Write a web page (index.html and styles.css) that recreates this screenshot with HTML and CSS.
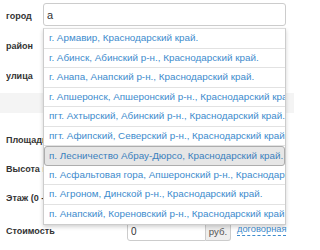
FILE: index.html
```html
<!DOCTYPE html>
<html lang="ru">
<head>
<meta charset="utf-8">
<link rel="stylesheet" href="styles.css">
</head>
<body>
<form class="form">
  <div class="row top">
    <label class="lbl">город</label>
    <div class="field">
      <input class="inp" type="text" value="а">
      <ul class="suggest">
        <li class="item">г. Армавир, Краснодарский край.</li>
        <li class="item">г. Абинск, Абинский р-н., Краснодарский край.</li>
        <li class="item">г. Анапа, Анапский р-н., Краснодарский край.</li>
        <li class="item">г. Апшеронск, Апшеронский р-н., Краснодарский край.</li>
        <li class="item">пгт. Ахтырский, Абинский р-н., Краснодарский край.</li>
        <li class="item">пгт. Афипский, Северский р-н., Краснодарский край.</li>
        <li class="item active">п. Лесничество Абрау-Дюрсо, Краснодарский край.</li>
        <li class="item">п. Асфальтовая гора, Апшеронский р-н., Краснодарский край.</li>
        <li class="item">п. Агроном, Динской р-н., Краснодарский край.</li>
        <li class="item">п. Анапский, Кореновский р-н., Краснодарский край.</li>
      </ul>
    </div>
  </div>
  <div class="row top">
    <label class="lbl">район</label>
    <div class="field"><input class="inp" type="text"></div>
  </div>
  <div class="row top">
    <label class="lbl">улица</label>
    <div class="field"><input class="inp" type="text"></div>
  </div>
  <div class="band"></div>
  <div class="row low first">
    <label class="lbl wide">Площадь (кв. м)</label>
    <input class="inp small" type="text">
  </div>
  <div class="row low">
    <label class="lbl wide">Высота потолков</label>
    <input class="inp small" type="text">
  </div>
  <div class="row low">
    <label class="lbl wide">Этаж (0 - цоколь)</label>
    <input class="inp small" type="text">
  </div>
  <div class="row low price">
    <label class="lbl wide">Стоимость</label>
    <div class="group">
      <input class="inp price-inp" type="text" value="0">
      <span class="addon">руб.</span>
    </div>
    <a class="dashed" href="#">договорная</a>
  </div>
</form>
</body>
</html>
```

FILE: styles.css
```css
* { box-sizing: border-box; }
html, body { margin: 0; padding: 0; background: #fff; }
body {
  font-family: "Liberation Sans", Arial, sans-serif;
  font-size: 10px;
  color: #333;
  width: 294px;
  height: 250px;
  overflow: hidden;
}
.form {
  padding: 3px 8px 0 6px;
}
.row {
  display: flex;
  align-items: center;
}
.row.top {
  height: 23px;
  margin-bottom: 7px;
}
.lbl {
  white-space: nowrap;
  overflow: hidden;
  flex: none;
  font-size: 9px;
  font-weight: bold;
  color: #333;
}
.top .lbl { width: 37px; padding-top: 2px; }
.field {
  position: relative;
  flex: 1;
  height: 100%;
}
.inp {
  display: block;
  width: 100%;
  height: 100%;
  margin: 0;
  border: 1px solid #ccc;
  border-radius: 3px;
  padding: 0 3px;
  font-family: "Liberation Sans", Arial, sans-serif;
  font-size: 11px;
  color: #333;
  background: #fff;
  outline: none;
}
.suggest {
  position: absolute;
  top: 25px;
  left: 0;
  right: 0;
  margin: 0;
  padding: 0;
  list-style: none;
  background: #fff;
  border: 1px solid #ccc;
  border-top-color: #ddd;
  box-shadow: 0 2px 4px rgba(0, 0, 0, 0.18);
  z-index: 10;
}
.item {
  height: 19.5px;
  line-height: 18.5px;
  padding-left: 5px;
  border-bottom: 1px solid #e2e2e2;
  white-space: nowrap;
  overflow: hidden;
  color: #3d8bcd;
  font-size: 9.85px;
}
.item:last-child { border-bottom: 0; }
.item.active {
  background: #e6e6e6;
  border: 1px solid #adadad;
  border-radius: 3px;
  padding-left: 4px;
  color: #3a7fbd;
}
.band {
  height: 20px;
  margin: 1px -8px 0 -6px;
  background: #f4f4f4;
}
.row.low {
  height: 20px;
  margin-top: 9px;
}
.row.low.first { margin-top: 17px; }
.row.low.price { margin-top: 13px; }
.lbl.wide { width: 121px; }
.inp.small { width: 79px; }
.group {
  display: flex;
  height: 100%;
}
.price-inp {
  width: 79px;
  border-radius: 3px 0 0 3px;
  font-size: 10px;
}
.addon {
  display: flex;
  align-items: center;
  justify-content: center;
  width: 25px;
  background: #eee;
  border: 1px solid #ccc;
  border-left: 0;
  border-radius: 0 3px 3px 0;
  color: #555;
  font-size: 9.6px;
}
.dashed {
  margin-left: 6px;
  margin-top: -4px;
  color: #3d8bcd;
  text-decoration: none;
  border-bottom: 1px dashed #3d8bcd;
  line-height: 12px;
  font-size: 9.3px;
  white-space: nowrap;
}
```
